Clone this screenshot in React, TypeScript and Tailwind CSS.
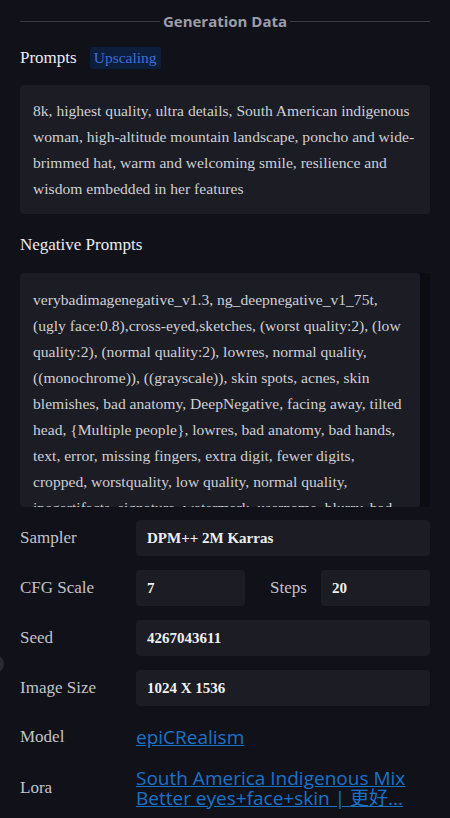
import React from "react";

const serif = { fontFamily: '"Liberation Serif", "Times New Roman", serif' };
const sans = { fontFamily: '"Open Sans", "Noto Sans", "Noto Sans CJK SC", sans-serif' };

const prompt =
  "8k, highest quality, ultra details, South American indigenous woman, high-altitude mountain landscape, poncho and wide-brimmed hat, warm and welcoming smile, resilience and wisdom embedded in her features";

const negative =
  "verybadimagenegative_v1.3, ng_deepnegative_v1_75t, (ugly face:0.8),cross-eyed,sketches, (worst quality:2), (low quality:2), (normal quality:2), lowres, normal quality, ((monochrome)), ((grayscale)), skin spots, acnes, skin blemishes, bad anatomy, DeepNegative, facing away, tilted head, {Multiple people}, lowres, bad anatomy, bad hands, text, error, missing fingers, extra digit, fewer digits, cropped, worstquality, low quality, normal quality, jpegartifacts, signature, watermark, username, blurry, bad feet, cropped, poorly drawn hands, poorly drawn face, mutation, deformed";

function Field({ children }: { children: React.ReactNode }) {
  return (
    <div className="flex h-9 flex-1 items-center rounded-sm bg-[#1b1c24] px-[11px] text-[15px] font-bold text-[#f0f0f2]">
      {children}
    </div>
  );
}

function Row({ label, children }: { label: string; children: React.ReactNode }) {
  return (
    <div className="flex items-center">
      <div className="w-[116px] shrink-0 text-[17px] leading-6 text-[#c3c3c9]">{label}</div>
      {children}
    </div>
  );
}

export default function App() {
  return (
    <div className="relative min-h-[818px] w-[450px] overflow-hidden bg-[#11111a] px-5" style={serif}>
      <div className="flex items-center gap-[3px] pt-[9px]">
        <div className="h-px flex-1 bg-[#3a3a45]" />
        <span className="text-[15px] font-bold leading-6 text-[#9d9da8]" style={sans}>
          Generation Data
        </span>
        <div className="h-px flex-1 bg-[#3a3a45]" />
      </div>

      <div className="mt-[13px] flex h-6 items-center gap-[13px]">
        <h3 className="text-[17px] leading-6 text-[#ececf0]">Prompts</h3>
        <span className="rounded-[3px] bg-[#0c1e3c] px-[4px] py-[2px] text-[15.5px] leading-[18px] text-[#3f6fd0]">
          Upscaling
        </span>
      </div>

      <div className="mt-[15px] rounded-[4px] bg-[#1b1c24] px-[13px] pb-[12px] pt-[13px] text-[15.6px] leading-[26px] text-[#cfcfd5]">
        {prompt}
      </div>

      <h3 className="mt-[19px] text-[17px] leading-6 text-[#ececf0]">Negative Prompts</h3>

      <div className="mt-[16px] flex h-[234px]">
        <div className="flex-1 overflow-hidden rounded-[4px] bg-[#1b1c24] px-[13px] pt-[14px] text-[15.6px] leading-[26px] text-[#cfcfd5]">
          {negative}
        </div>
        <div className="w-[10px] rounded-sm bg-[#0c0c13]" />
      </div>

      <div className="mt-[13px] flex flex-col gap-[14px]">
        <Row label="Sampler">
          <Field>DPM++ 2M Karras</Field>
        </Row>
        <Row label="CFG Scale">
          <div className="flex flex-1 items-center">
            <Field>7</Field>
            <div className="w-[76px] pl-[25px] text-[17px] leading-6 text-[#c3c3c9]">Steps</div>
            <Field>20</Field>
          </div>
        </Row>
        <Row label="Seed">
          <Field>4267043611</Field>
        </Row>
        <Row label="Image Size">
          <Field>1024 X 1536</Field>
        </Row>
      </div>

      <div className="mt-[19px] flex flex-col gap-[19px]">
        <Row label="Model">
          <a href="#" className="text-[19px] leading-6 text-[#1a73c9] underline" style={sans}>
            epiCRealism
          </a>
        </Row>
        <Row label="Lora">
          <a href="#" className="text-[19px] leading-[20px] text-[#1a73c9] underline" style={sans}>
            South America Indigenous Mix
            <br />
            Better eyes+face+skin | 更好...
          </a>
        </Row>
      </div>

      <div className="absolute left-[-14px] top-[655px] h-[18px] w-[18px] rounded-full bg-[#2a2a33]" />
    </div>
  );
}
